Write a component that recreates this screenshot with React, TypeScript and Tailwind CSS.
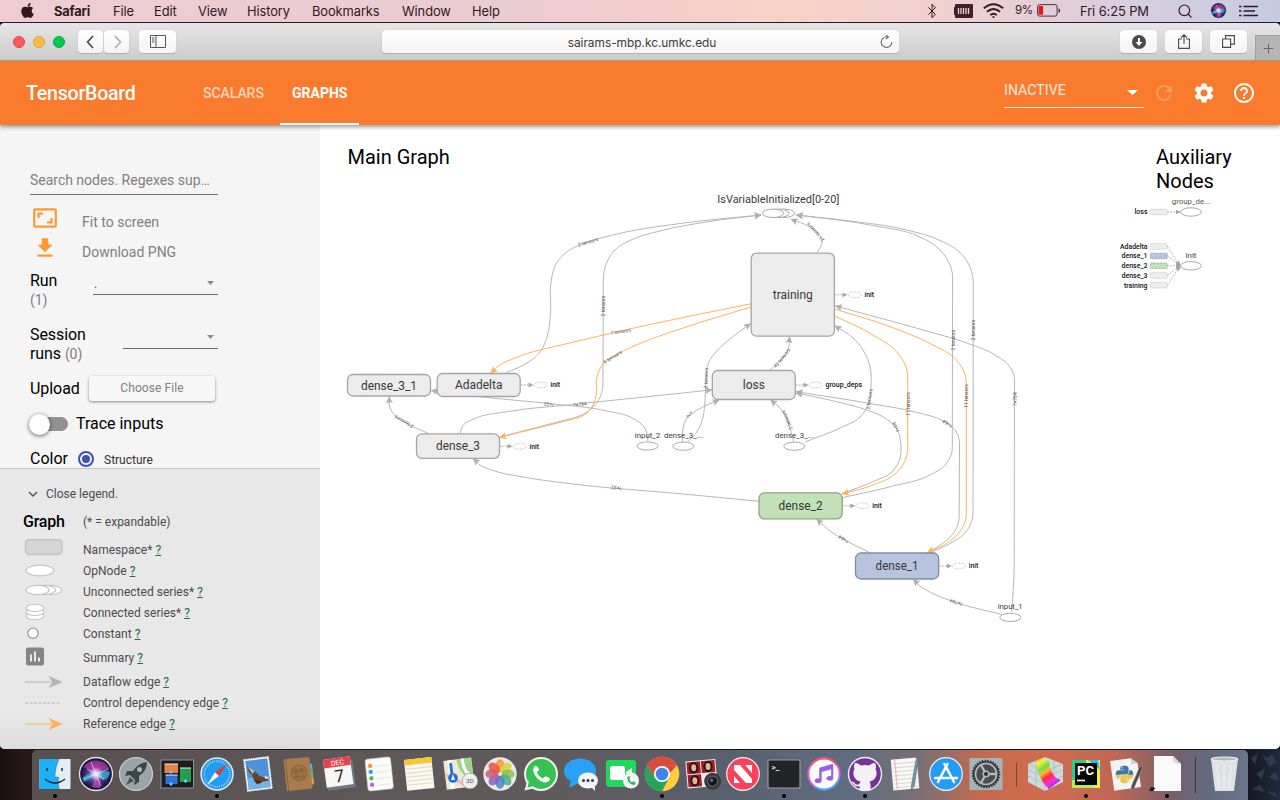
import React from "react";
import { MdRefresh, MdSettings, MdHelpOutline, MdAspectRatio, MdGetApp, MdExpandMore, MdAssessment } from "react-icons/md";
import { FaApple, FaGithubAlt, FaMusic, FaPython } from "react-icons/fa";
import { Bluetooth, Search, Plus } from "lucide-react";

type P = [number, number];

// Smooth curve through the given points; tangents lean towards the shorter neighbouring segment.
const spline = (p: P[]) => {
  const n = p.length;
  const seg = (i: number) => Math.hypot(p[i + 1][0] - p[i][0], p[i + 1][1] - p[i][1]) || 1;
  const unit = (i: number): P => [(p[i + 1][0] - p[i][0]) / seg(i), (p[i + 1][1] - p[i][1]) / seg(i)];
  const tan = p.map((_, i): P => {
    if (i === 0) return unit(0);
    if (i === n - 1) return unit(n - 2);
    const l1 = seg(i - 1);
    const l2 = seg(i);
    const u1 = unit(i - 1);
    const u2 = unit(i);
    const v: P = [u1[0] * l2 + u2[0] * l1, u1[1] * l2 + u2[1] * l1];
    const u: P = l1 > l2 * 3 ? u1 : l2 > l1 * 3 ? u2 : v;
    const m = Math.hypot(u[0], u[1]) || 1;
    return [u[0] / m, u[1] / m];
  });
  let d = `M${p[0][0]} ${p[0][1]}`;
  for (let i = 0; i < n - 1; i++) {
    const k = seg(i) / 2.8;
    d += `C${p[i][0] + tan[i][0] * k} ${p[i][1] + tan[i][1] * k} ${p[i + 1][0] - tan[i + 1][0] * k} ${p[i + 1][1] - tan[i + 1][1] * k} ${p[i + 1][0]} ${p[i + 1][1]}`;
  }
  return d;
};

type Edge = { p: P[]; ref?: boolean; label: string; at: P; rot: number };

const edges: Edge[] = [
  { p: [[506, 372.7], [528, 362.500], [540, 352], [547.500, 335], [550.5, 313], [551.3, 280], [556, 264], [566, 252.500], [582, 244], [607, 236.5], [680, 223.5], [761, 215]], label: "2 tensors", at: [588, 242], rot: -17 },
  { p: [[500, 437], [573, 418], [592, 408], [600.500, 396], [603, 380], [603.3, 280], [607, 262], [615, 250], [631, 240], [660, 231], [706, 222], [761, 215]], label: "2 tensors", at: [603.3, 306], rot: -90 },
  { p: [[429, 433.7], [407, 423.500], [394, 414.500], [389.8, 407], [389, 396.8]], label: "2 tensors", at: [404, 421.7], rot: 210 },
  { p: [[648, 441.5], [645.500, 429], [633, 418.5], [607, 411], [553, 404], [486.7, 397.4], [450, 393], [431, 390.5]], label: "?×32", at: [549, 404.2], rot: 187 },
  { p: [[460, 433.7], [463, 425.500], [475, 418.500], [507, 411.7], [573, 404.500], [680, 393.3], [712, 389.7]], label: "?×784", at: [580, 404.3], rot: -6 },
  { p: [[759, 501.3], [680, 493.7], [573, 484], [523, 477], [493, 470.5], [480, 465], [473.3, 458.7]], label: "?×32", at: [616.3, 487.6], rot: 185 },
  { p: [[817.3, 252.3], [821, 246], [822, 240], [818, 233], [810, 227], [791, 219.3]], label: "21 tensors", at: [815.5, 232], rot: 228 },
  { p: [[770, 370], [783, 358], [788, 350], [789.7, 336.7]], label: "42 tensors", at: [782, 358], rot: -52 },
  { p: [[1011.7, 612], [1013, 593], [1014.2, 567], [1014.5, 380], [1010, 367], [996.7, 356], [966.7, 343], [923, 330], [835.5, 306]], label: "?×784", at: [1015, 399], rot: -90 },
  { p: [[930, 552.7], [950, 543.5], [965, 533], [971.5, 521.7], [973, 506.7], [973.3, 283], [970, 267], [960, 252.500], [940, 240.500], [906.7, 230], [850, 221], [796.5, 215]], label: "2 tensors", at: [973.5, 330], rot: -90 },
  { p: [[842.3, 497.7], [893, 486], [930, 475], [946.7, 463], [952.3, 448], [952.6, 277], [948, 261], [938, 248], [920, 237], [873, 225.5], [796.5, 215]], label: "2 tensors", at: [953, 340], rot: -90 },
  { p: [[927, 552.7], [943, 543], [955, 531], [959.2, 516], [959.5, 444], [955, 430], [944, 421.500], [917, 412.500], [873, 404], [796, 391.7]], label: "?×64", at: [947.7, 423.5], rot: 210 },
  { p: [[842, 493.5], [873, 481.7], [893, 471], [900, 458], [900.7, 443], [897.500, 430], [886.7, 419], [866.7, 410], [840, 402.5], [796, 393]], label: "?×64", at: [896, 427], rot: 240 },
  { p: [[1001.7, 614.5], [956.7, 602.7], [933, 593.5], [920, 586], [913.3, 579.5]], label: "?×784", at: [956.3, 602.3], rot: 198 },
  { p: [[870, 552.7], [846.7, 541], [830, 531], [816.7, 519.3]], label: "?×64", at: [843.7, 539], rot: 210 },
  { p: [[682.7, 441.7], [682.7, 430], [687, 418], [700, 408.5], [719, 400]], label: "?×?", at: [689.5, 415], rot: -48 },
  { p: [[687.7, 442], [698, 430], [703, 417], [705, 400], [706, 380], [708.5, 363], [716.7, 351], [730, 339], [750.5, 323.5]], label: "2 tensors", at: [706, 378], rot: -88 },
  { p: [[793.7, 441.7], [790.7, 430], [785, 414.5], [778, 406], [770.7, 400]], label: "2 tensors", at: [787, 420], rot: 246 },
  { p: [[805, 442], [840, 428], [860, 417], [868, 406], [871, 386.7], [870, 367], [863, 350], [853, 338], [835, 325.7]], label: "2 tensors", at: [869.3, 399], rot: -80 },
  { p: [[751, 303.7], [640, 326.7], [540, 350], [515, 358], [500, 365], [490.7, 373]], ref: true, label: "7 tensors", at: [620.7, 331.5], rot: -9 },
  { p: [[751, 307], [680, 329], [640, 343.5], [617, 354.5], [603, 364], [597, 377], [596, 396], [589, 411], [570, 420], [499.7, 437.3]], ref: true, label: "6 tensors", at: [612.7, 357], rot: -32 },
  { p: [[834.7, 316], [873, 335], [896.7, 352], [906, 367], [907.7, 385], [907.7, 446.7], [905, 461], [895, 474], [873, 485], [842.5, 494]], ref: true, label: "17 tensors", at: [907.9, 404], rot: -90 },
  { p: [[834.7, 309], [890, 326.7], [933, 345], [956, 359.5], [964.500, 373], [966.3, 393], [966.3, 506.7], [965, 522], [958, 534], [946.7, 543.3], [927.5, 552.6]], ref: true, label: "11 tensors", at: [966.7, 396], rot: -90 },
];

const nodes = [
  { t: "dense_3_1", x: 347.5, y: 374.5, w: 83, h: 21.5, f: "#ececec", s: "#a5a5a5", tw: 56 },
  { t: "Adadelta", x: 437.2, y: 373.5, w: 83, h: 23, f: "#ececec", s: "#a5a5a5", tw: 47.5 },
  { t: "dense_3", x: 416.5, y: 433.8, w: 83, h: 24.5, f: "#ececec", s: "#a5a5a5", tw: 44 },
  { t: "training", x: 751.2, y: 253.2, w: 83.2, h: 83, f: "#ececec", s: "#a5a5a5", tw: 40 },
  { t: "loss", x: 712.3, y: 370.5, w: 83, h: 29, f: "#ececec", s: "#a5a5a5", tw: 22 },
  { t: "dense_2", x: 759, y: 492.8, w: 83.2, h: 26, f: "#c2e1b8", s: "#8ba585", tw: 44 },
  { t: "dense_1", x: 855.5, y: 553, w: 83.2, h: 26, f: "#b6c4de", s: "#828ca3", tw: 43 },
];

const ops: { t: string; x: number; y: number; w: number; lx: number }[] = [
  { t: "input_2", x: 647.5, y: 446, w: 25.5, lx: 647.5 },
  { t: "dense_3_...", x: 683.3, y: 446.2, w: 39, lx: 683.5 },
  { t: "dense_3_...", x: 794.3, y: 446.2, w: 39, lx: 794.5 },
  { t: "input_1", x: 1010.3, y: 617.4, w: 25, lx: 1010.2 },
];

const annotations: { x: number; y: number; t: string; w: number }[] = [
  { x: 834.5, y: 294.8, t: "init", w: 9.5 },
  { x: 795.5, y: 385, t: "group_deps", w: 36.5 },
  { x: 520.5, y: 385, t: "init", w: 9.5 },
  { x: 499.5, y: 446.3, t: "init", w: 9.5 },
  { x: 842.3, y: 505.8, t: "init", w: 9.5 },
  { x: 938.8, y: 566, t: "init", w: 9.5 },
];

const auxRows = [
  { t: "Adadelta", y: 246.5, w: 27.5, f: "#eeeeee", s: "#c4c4c4" },
  { t: "dense_1", y: 256, w: 26, f: "#b6c4de", s: "#8c9bb8" },
  { t: "dense_2", y: 265.8, w: 26, f: "#c2e1b8", s: "#86b07a" },
  { t: "dense_3", y: 275.5, w: 26, f: "#eeeeee", s: "#c4c4c4" },
  { t: "training", y: 285.2, w: 23.5, f: "#eeeeee", s: "#c4c4c4" },
];

function Graph() {
  return (
    <svg className="absolute inset-0 h-full w-full font-[Roboto,sans-serif]" viewBox="320 125 960 624">
      <defs>
        <marker id="arrow" markerUnits="userSpaceOnUse" markerWidth="8" markerHeight="8" refX="6.5" refY="3.5" orient="auto">
          <path d="M0 0L7 3.5L0 7L1.2 3.5Z" fill="#b0b0b0" />
        </marker>
        <marker id="arrow-ref" markerUnits="userSpaceOnUse" markerWidth="8" markerHeight="8" refX="6.5" refY="3.5" orient="auto">
          <path d="M0 0L7 3.5L0 7L1.2 3.5Z" fill="#ffb15c" />
        </marker>
      </defs>
      {edges.map((e, i) => (
        <g key={i}>
          <path d={spline(e.p)} fill="none" stroke={e.ref ? "#ffb15c" : "#b7b7b7"} strokeWidth="1" markerEnd={e.ref ? "url(#arrow-ref)" : "url(#arrow)"} />
          <text transform={`translate(${e.at[0]} ${e.at[1]}) rotate(${e.rot})`} y="1.7" textAnchor="middle" fontSize="5" fill="#555">{e.label}</text>
        </g>
      ))}
      {nodes.map((n) => (
        <g key={n.t}>
          <rect x={n.x} y={n.y} width={n.w} height={n.h} rx="5.5" fill={n.f} stroke={n.s} strokeWidth="1.3" />
          <text x={n.x + n.w / 2} y={n.y + n.h / 2 + 4.4} textAnchor="middle" fontSize="12.3" textLength={n.tw} lengthAdjust="spacingAndGlyphs" fill="#383838">{n.t}</text>
        </g>
      ))}
      {ops.map((o, i) => (
        <g key={i}>
          <ellipse cx={o.x} cy={o.y} rx="10.5" ry="4.1" fill="#fff" stroke="#ababab" />
          <text x={o.lx} y={o.y - 8.2} textAnchor="middle" fontSize="8" textLength={o.w} lengthAdjust="spacingAndGlyphs" fill="#3a3a3a">{o.t}</text>
        </g>
      ))}
      {[784, 778.5, 773].map((x) => (
        <ellipse key={x} cx={x} cy="213.3" rx="10.6" ry="4.2" fill="#fff" stroke="#ababab" />
      ))}
      <text x="778.3" y="203.4" textAnchor="middle" fontSize="11" textLength="122" lengthAdjust="spacingAndGlyphs" fill="#3a3a3a">IsVariableInitialized[0-20]</text>
      {annotations.map((a, i) => (
        <g key={i}>
          <path d={`M${a.x + 0.5} ${a.y}h9`} stroke="#a5a5a5" strokeDasharray="1.6 1.2" />
          <path d={`M${a.x + 8} ${a.y - 2.4}l5 2.4l-5 2.4z`} fill="#a5a5a5" />
          <ellipse cx={a.x + 20.2} cy={a.y} rx="6.6" ry="2.9" fill="#fff" stroke="#b5b5b5" strokeWidth="0.8" strokeDasharray="1.6 1.2" />
          <text x={a.x + 30} y={a.y + 2.3} fontSize="6.8" fontWeight="500" textLength={a.w} lengthAdjust="spacingAndGlyphs" fill="#111">{a.t}</text>
        </g>
      ))}
      <text x="1191" y="203.8" textAnchor="middle" fontSize="8" textLength="38.5" lengthAdjust="spacingAndGlyphs" fill="#555">group_de...</text>
      <text x="1191" y="257.8" textAnchor="middle" fontSize="8" textLength="11" lengthAdjust="spacingAndGlyphs" fill="#444">init</text>
      <text x="1147.5" y="214.4" textAnchor="end" fontSize="6.8" fontWeight="500" textLength="13" lengthAdjust="spacingAndGlyphs" fill="#111">loss</text>
      <rect x="1150.3" y="209.3" width="17" height="5.4" rx="1" fill="#eee" stroke="#c4c4c4" strokeWidth="0.8" strokeDasharray="1.8 1" />
      <path d="M1167.5 212h9" stroke="#ababab" strokeDasharray="1.6 1.2" />
      <path d="M1176 209.7l5 2.3l-5 2.3z" fill="#a5a5a5" />
      <ellipse cx="1191" cy="212" rx="10.4" ry="4.2" fill="#fff" stroke="#ababab" />
      {auxRows.map((r) => (
        <g key={r.t}>
          <text x="1147.5" y={r.y + 2.3} textAnchor="end" fontSize="6.8" fontWeight="500" textLength={r.w} lengthAdjust="spacingAndGlyphs" fill="#111">{r.t}</text>
          <rect x="1150.3" y={r.y - 2.8} width="17" height="5.6" rx="1" fill={r.f} stroke={r.s} strokeWidth="0.8" strokeDasharray="1.8 1" />
          <path d={`M1167.5 ${r.y}L1178 ${265.8 + (r.y - 265.8) * 0.15}`} stroke="#ababab" strokeWidth="0.9" strokeDasharray="1.6 1.2" />
        </g>
      ))}
      <path d="M1176 262.500l3-1.800l1.800 5.100l-1.800 5.100l-3-1.800z" fill="#a5a5a5" />
      <ellipse cx="1191" cy="265.8" rx="10.4" ry="4.2" fill="#fff" stroke="#ababab" />
    </svg>
  );
}

const menus: [string, string][] = [
  ["File", "w-[22px]"], ["Edit", "w-[25px]"], ["View", "w-[30px]"], ["History", "w-[46px]"],
  ["Bookmarks", "w-[71px]"], ["Window", "w-[51px]"], ["Help", "w-[29px]"],
];

function MenuBar() {
  return (
    <div className="flex h-[22px] shrink-0 items-center bg-[linear-gradient(90deg,#edcdd1_0%,#eaccd3_40%,#f3cfcb_52%,#f6d2c6_62%,#efd0d1_75%,#d8cddf_88%,#c6cbe2_100%)] font-[Inter,sans-serif] text-[12.9px] tracking-[-0.1px] text-[#35181c]">
      <FaApple className="ml-[19px] size-[17px] -mt-[1px]" />
      <span className="ml-[18px] w-[41px] whitespace-nowrap pt-[2px] font-bold tracking-[-0.2px]">Safari</span>
      <div className="ml-[18px] flex gap-[19px] pt-[2px]">
        {menus.map(([m, w]) => (
          <span key={m} className={`${w} whitespace-nowrap`}>{m}</span>
        ))}
      </div>
      <div className="ml-auto flex items-center">
        <Bluetooth className="mr-[14px] size-4" strokeWidth={1.5} />
        <svg className="mr-[10px] h-[14px] w-[19px]" viewBox="0 0 19 14">
          <path d="M2 0h16a1 1 0 0 1 1 1v12a1 1 0 0 1-1 1H2a1 1 0 0 1-1-1v-2H0V3h1V1a1 1 0 0 1 1-1z" fill="#3f2225" />
          <path d="M4.500 4v6M7 4v6M9.500 4v6M12 4v6M14.500 4v6" stroke="#eed0d2" strokeWidth="1.3" />
        </svg>
        <svg className="mr-[11px] h-[16px] w-[21px]" viewBox="0 0 21 16" fill="none" stroke="#38191d" strokeWidth="1.9">
          <path d="M.8 5.300Q10.500-2.800 20.200 5.300M4 8.800Q10.500 3.200 17 8.800M7.200 12.100Q10.500 9.300 13.800 12.100" />
          <circle cx="10.500" cy="14" r="1.100" fill="#38191d" stroke="none" />
        </svg>
        <span className="w-[22px] whitespace-nowrap text-[11.6px] tracking-[-0.5px]">9%</span>
        <svg className="mr-[20px] h-[13px] w-[23px]" viewBox="0 0 23 13">
          <rect x="0.600" y="0.600" width="19.500" height="11.500" rx="2" fill="none" stroke="#4b2f34" />
          <rect x="1.600" y="2" width="4.400" height="8.700" fill="#ee1111" />
          <path d="M21.500 4.500a2 2 0 0 1 0 4z" fill="#4b2f34" />
        </svg>
        <span className="w-[75px] whitespace-nowrap pt-[2px]">Fri 6:25 PM</span>
        <Search className="ml-[22px] size-[16px]" strokeWidth={1.8} />
        <svg className="ml-[17px] size-[17px]" viewBox="-18 -18 36 36"><SiriArt /></svg>
        <svg className="ml-[12px] mr-[22px] h-[12px] w-[19px]" viewBox="0 0 19 12">
          <path d="M4.500 1.500h14.500M4.500 6h11.500M4.500 10.500h14.500" stroke="#2a1a2c" strokeWidth="1.700" />
          <path d="M0 1.500h2.500M0 6h2.500M0 10.500h2.500" stroke="#2a1a2c" strokeWidth="1.700" />
        </svg>
      </div>
    </div>
  );
}

const btn = "flex h-[23px] items-center justify-center rounded-[4px] bg-gradient-to-b from-white to-[#f3f3f3] shadow-[0_1px_0_#b0b0b0,0_0_1px_#aaa]";

function Toolbar() {
  return (
    <div className="flex h-[38px] shrink-0 items-center border-b border-[#a2a9a9] bg-gradient-to-b from-[#e6e6e6] to-[#cccccc]">
      <span className="ml-[13px] size-3 rounded-full border border-[#e2474a] bg-[#fc5b57]" />
      <span className="ml-2 size-3 rounded-full border border-[#dfa23a] bg-[#fdbc40]" />
      <span className="ml-2 size-3 rounded-full border border-[#08ab44] bg-[#00c951]" />
      <div className={`${btn} ml-[13px] w-[25px]`}>
        <svg className="size-4" viewBox="0 0 16 16"><path d="M10 2L4.500 8l5.500 6" fill="none" stroke="#444" strokeWidth="1.600" /></svg>
      </div>
      <div className={`${btn} ml-px w-[25px]`}>
        <svg className="size-4" viewBox="0 0 16 16"><path d="M6 2l5.500 6L6 14" fill="none" stroke="#aaa" strokeWidth="1.600" /></svg>
      </div>
      <div className={`${btn} ml-[10px] w-[37px]`}>
        <svg className="h-[13px] w-[16px]" viewBox="0 0 16 13"><path d="M.5.5h15v12H.5zM6 .5v12M2 3h2.500M2 5h2.500M2 7h2.500" fill="none" stroke="#555" /></svg>
      </div>
      <div className={`${btn} ml-[206px] w-[517px] px-[5px]`}>
        <span className="ml-auto mr-auto pl-[17px] pt-[2px] font-[Inter,sans-serif] text-[11.9px] tracking-[-0.020px] text-[#3c3c3c]">sairams-mbp.kc.umkc.edu</span>
        <svg className="mr-px size-[13px]" viewBox="0 0 13 13" fill="none" stroke="#6a6a6a" strokeWidth="1.100">
          <path d="M11.800 7A5.300 5.300 0 1 1 6.500 1.800H8" /><path d="M6 0L8.500 1.900L6 4" />
        </svg>
      </div>
      <div className={`${btn} ml-[221px] w-[37px]`}>
        <svg className="size-[14px]" viewBox="0 0 14 14"><circle cx="7" cy="7" r="7" fill="#4a4a4a" /><path d="M7 3v5" stroke="#fff" strokeWidth="2" /><path d="M3.500 7h7L7 11z" fill="#fff" /></svg>
      </div>
      <div className={`${btn} ml-[8px] w-[37px]`}>
        <svg className="h-[15px] w-[12px]" viewBox="0 0 12 15"><path d="M4 5H.600v9.400h10.800V5H8M6 10V1M3 3.700L6 .800l3 2.900" fill="none" stroke="#4a4a4a" strokeWidth="1.100" /></svg>
      </div>
      <div className={`${btn} ml-[8px] w-[37px]`}>
        <svg className="size-[13px]" viewBox="0 0 13 13"><path d="M.6 4h8v8.400h-8zM3.500 4V.6h8.900v8.500H8.600" fill="none" stroke="#4a4a4a" strokeWidth="1.100" /></svg>
      </div>
      <div className="ml-auto mt-[12px] flex h-[25px] w-[25px] items-center justify-center border-l border-t border-[#a0a0a0] bg-[#b5b5b5]">
        <Plus className="size-[15px] text-[#666]" strokeWidth={1.600} />
      </div>
    </div>
  );
}

function Header() {
  return (
    <header className="relative z-10 flex h-16 shrink-0 items-center bg-[#fa7b2d] text-white shadow-[0_2px_4px_rgba(0,0,0,0.4)]">
      <div className="ml-[26px] w-[177px] pt-[2px] text-[19.600px] font-medium tracking-[-0.250px]">TensorBoard</div>
      <div className="w-[77px] pt-px text-[14px] font-medium tracking-[-0.050px] text-white/70">SCALARS</div>
      <div className="flex h-16 w-[79px] items-center border-b-2 border-white pl-[12px] pt-[2px] text-[14px] font-bold">GRAPHS</div>
      <div className="ml-auto mr-[8px] flex h-[32px] w-[140px] justify-between border-b border-white/80 pb-1 text-[14px] leading-[29px] -mt-[2px]">
        <span className="tracking-[0.100px] text-white/85">INACTIVE</span>
        <svg className="mt-[14px] mr-[6px] h-[5px] w-[11px]" viewBox="0 0 11 5"><path d="M0 0h11L5.500 5z" fill="#fff" /></svg>
      </div>
      <MdRefresh className="size-6 opacity-25" />
      <MdSettings className="ml-4 size-6" />
      <MdHelpOutline className="ml-4 mr-[24px] size-6" />
    </header>
  );
}

const Caret = () => <svg className="h-[4px] w-[7px]" viewBox="0 0 7 4"><path d="M0 0h7L3.500 4z" fill="#8a8a8a" /></svg>;

function Controls() {
  return (
    <div className="h-[343px] overflow-hidden pl-[30px] text-[14px]">
      <div className="mt-[40px] flex h-[30px] w-[188px] items-center whitespace-nowrap border-b border-[#6d6d6d] pt-[2px] text-[14px] tracking-[-0.020px] text-[#808080]">Search nodes. Regexes sup…</div>
      <div className="mt-[9px] flex h-[30px] items-center">
        <MdAspectRatio className="ml-[2px] size-[26px] -mt-[2px] text-[#ff9834]" />
        <span className="ml-[24px] pt-[7px] tracking-[0.020px] text-[#808080]">Fit to screen</span>
      </div>
      <div className="flex h-[30px] items-center">
        <MdGetApp className="ml-[2px] size-[26px] -mt-[2px] text-[#ff9834]" />
        <span className="ml-[24px] pt-[7px] text-[#808080]">Download PNG</span>
      </div>
      <div className="mt-[7px] flex h-[54px]">
        <div className="w-[63px] text-[16px] leading-[20px] tracking-[-0.050px] text-black">Run<div className="text-[14px] leading-[19px] text-[#808080]">(1)</div></div>
        <div className="flex h-[24px] w-[125px] items-center justify-between border-b border-[#6d6d6d] pl-px pr-[4px]"><span className="pt-[2px] text-[12px] text-[#555]">.</span><Caret /></div>
      </div>
      <div className="flex h-[54px]">
        <div className="w-[93px] text-[16px] leading-[19px] tracking-[-0.080px] text-black">Session<br />runs <span className="text-[14px] text-[#808080]">(0)</span></div>
        <div className="flex h-[24px] w-[95px] items-center justify-end border-b border-[#6d6d6d] pr-[4px]"><Caret /></div>
      </div>
      <div className="-mt-[4px] flex h-[26px] items-center">
        <span className="w-[59px] pt-[2px] text-[16px] tracking-[-0.050px] text-black">Upload</span>
        <span className="flex h-[25px] w-[126px] items-center justify-center rounded-[3px] bg-[#f7f7f7] text-[12px] tracking-[0.080px] text-[#808080] shadow-[0_1px_3px_rgba(0,0,0,0.45)]">Choose File</span>
      </div>
      <div className="mt-[12px] flex h-[22px] items-center">
        <div className="-ml-px mr-px flex h-[14px] w-[39px] items-center"><span className="relative z-10 size-[21px] shrink-0 rounded-full bg-white shadow-[0_1px_4px_rgba(0,0,0,0.6)]" /><span className="-ml-[12px] h-[14px] w-[30px] rounded-full bg-[#929292]" /></div>
        <span className="ml-[7px] text-[16px] tracking-[-0.020px] text-black">Trace inputs</span>
      </div>
      <div className="mt-[13px] flex h-[22px] items-center">
        <span className="w-[48px] text-[16px] text-black">Color</span>
        <span className="flex size-4 items-center justify-center rounded-full border-2 border-[#3f51b5]"><span className="size-2 rounded-full bg-[#3f51b5]" /></span>
        <span className="ml-[10px] pt-px text-[12px] text-[#333]">Structure</span>
      </div>
    </div>
  );
}

const legend: { t: string; h: string; icon: React.ReactNode }[] = [
  { t: "Namespace*", h: "h-[21px]", icon: <rect x="1.500" y="-9.800" width="36.500" height="14.700" rx="4" fill="#d5d5d5" stroke="#c3c3c3" strokeWidth="1.500" /> },
  { t: "OpNode", h: "h-[21px]", icon: <ellipse cx="16" cy="0" rx="13.800" ry="5.300" fill="#fff" stroke="#c5c5c5" strokeWidth="1.200" /> },
  { t: "Unconnected series*", h: "h-[21px]", icon: [26, 20, 13.500].map((x) => <ellipse key={x} cx={x} cy="-1.500" rx="11.500" ry="4.600" fill="#fff" stroke="#c5c5c5" strokeWidth="1.200" />) },
  { t: "Connected series*", h: "h-[21px]", icon: [3.500, -0.500, -4.500].map((y) => <ellipse key={y} cx="11" cy={y} rx="9" ry="3.500" fill="#fff" stroke="#c5c5c5" strokeWidth="1.100" />) },
  { t: "Constant", h: "h-[21px]", icon: <circle cx="9" cy="-0.300" r="5.200" fill="#fff" stroke="#8c8c8c" strokeWidth="1.100" /> },
  { t: "Summary", h: "h-[27px]", icon: <g transform="translate(-1 -13)"><MdAssessment size={24} color="#858585" /></g> },
  { t: "Dataflow edge", h: "h-[21px]", icon: <path d="M1 .500h26M26-4.500l11 5l-11 5l3-5z" fill="#b5b5b5" stroke="#b5b5b5" strokeWidth="1.200" /> },
  { t: "Control dependency edge", h: "h-[21px]", icon: <path d="M1 .500h36" stroke="#b5b5b5" strokeWidth="1.200" strokeDasharray="3 1.500" /> },
  { t: "Reference edge", h: "h-[21px]", icon: <path d="M1 .500h26M26-4.500l11 5l-11 5l3-5z" fill="#ffb15c" stroke="#ffb15c" strokeWidth="1.200" /> },
];

function Legend() {
  return (
    <div className="flex-1 border-t border-[#c8c8c8] bg-[linear-gradient(180deg,#e8e8e8_88%,#dcdcdc_100%)] pl-[24px] text-[12px] text-[#4c4c4c]">
      <div className="mt-[15px] flex h-5 items-center"><MdExpandMore className="size-[18px] text-[#555]" /><span className="ml-[4px]">Close legend.</span></div>
      <div className="mt-[8px] flex h-5 items-center"><span className="-ml-px w-[60px] text-[16px] font-medium tracking-[-0.200px] text-black">Graph</span><span>(* = expandable)</span></div>
      <div className="mt-[7px]">
        {legend.map((l) => (
          <div key={l.t} className={`flex items-center ${l.h}`}>
            <svg className="h-[21px] w-[59px] overflow-visible" viewBox="0 -10.5 59 21">{l.icon}</svg>
            <span className="tracking-[0.020px]">{l.t} <a className="text-[#1b6b40] underline">?</a></span>
          </div>
        ))}
      </div>
    </div>
  );
}

function SiriArt() {
  return (
    <>
      <defs>
        <radialGradient id="siri"><stop offset="0" stopColor="#d8b8ff" /><stop offset=".3" stopColor="#8a4fc0" /><stop offset=".65" stopColor="#3b2a6c" /><stop offset="1" stopColor="#0c1130" /></radialGradient>
        <radialGradient id="siri-glow"><stop offset="0" stopColor="#fff" /><stop offset="1" stopColor="#fff" stopOpacity="0" /></radialGradient>
      </defs>
      <circle r="16.500" fill="url(#siri)" stroke="#e3e3e8" strokeWidth="1.300" />
      <path d="M-13-7Q-6-15 4-13Q12-11 13-4Q7-7 0 0Q-6-5-13-7z" fill="#c93aa6" opacity=".6" />
      <path d="M-14 4Q-5-3 0 0Q8-5 14-2Q13 5 7 6Q4 4 0 1Q-6 6-12 8z" fill="#2fb8d8" opacity=".75" />
      <path d="M-4 13Q-1 5 0 1Q5 7 4 14z" fill="#d85bc8" opacity=".6" />
      <circle cx="0" cy="0" r="7" fill="url(#siri-glow)" opacity=".9" />
      <path d="M0 0L12-5M0 0L-12 5M0 0L-5-12M0 0L5 12M0 0L-9-5M0 0L8 5" stroke="#fff" strokeWidth=".8" opacity=".7" />
    </>
  );
}

const Gear = () => (
  <>
    <rect x="-16.500" y="-16" width="33" height="32" rx="1" fill="#a7b3b7" />
    <circle r="13" fill="#4a4d50" stroke="#2d2f31" strokeWidth="2.500" strokeDasharray="1.500 1.200" />
    <circle r="10.500" fill="none" stroke="#b5b9bb" strokeWidth="1.600" />
    <path d="M0 0H10M0 0L-5-9M0 0L-5 9" stroke="#b5b9bb" strokeWidth="2.300" />
    <circle r="2.800" fill="#303235" stroke="#b5b9bb" strokeWidth="1.500" />
  </>
);

type DockApp = { name: string; dot?: boolean; art: React.ReactNode };

const apps: DockApp[] = [
  { name: "finder", dot: true, art: <><path d="M-15.500-15H15.500V15H-15.500z" fill="#e3edf7" /><path d="M-15.500-15H4C1-8 0-3 0 3H3.500Q3 10 4 15H-15.500z" fill="#1cb0f6" /><path d="M-8-6v3M7-6v3M-10 5Q0 13 10 5" fill="none" stroke="#14243c" strokeWidth="1.500" /><path d="M4-15C1-8 0-3 0 3H3.500Q3 10 4 15" fill="none" stroke="#1c3c60" strokeWidth=".6" opacity=".6" /></> },
  { name: "siri", art: <SiriArt /> },
  { name: "launchpad", art: <><circle r="16.500" fill="#9ba5a9" stroke="#c8ced0" strokeWidth="1.200" /><path d="M11-12Q2-11-3-3L-9-3L-11 2L-6 1L-1 6L-2 11L3 8L3 2Q11-3 11-12z" fill="#3d4347" /><circle cx="3.500" cy="-4.500" r="2.500" fill="#aeb7ba" /><path d="M-6 3L-10 11L-2 7z" fill="#4c5357" /></> },
  { name: "mission", art: <><rect x="-16" y="-14" width="32.500" height="28" fill="#1b1c1e" stroke="#8b9295" /><rect x="-12.500" y="-10" width="13.500" height="9" fill="#eb813f" /><rect x="-11.500" y="1" width="12" height="9" fill="#2c74d7" /><rect x="3" y="-6" width="11" height="14" fill="#23a04a" /><path d="M-12.500-10h13.500M3-6h11M-11.500 1h12" stroke="#eee" /><circle cx="-6" cy="-2" r="1.700" fill="#5bc8ff" /><circle cx="-6" cy="10" r="1.700" fill="#5bc8ff" /><circle cx="8.500" cy="7" r="1.700" fill="#5bc8ff" /></> },
  { name: "safari", dot: true, art: <><circle r="16.700" fill="#e8eaec" /><circle r="15.200" fill="#1f9df0" /><circle r="12.800" fill="none" stroke="#c8e7fb" strokeWidth="2" strokeDasharray=".6 1.300" /><path d="M11-11L1.800 2L-2-1.800z" fill="#e9372f" /><path d="M-10 11L-2-1.800L1.800 2z" fill="#fff" /></> },
  { name: "mail", art: <g transform="rotate(-7)"><rect x="-12.500" y="-16" width="25" height="32" fill="#f2f2f2" stroke="#f2f2f2" strokeWidth="1" strokeDasharray="1.200 1.200" /><rect x="-11" y="-14.500" width="22" height="29" fill="#4b94da" /><rect x="-11" y="3" width="22" height="11.500" fill="#74b2e4" /><path d="M-10-9Q-8-3-2-2L1 2L8 5L10 8L4 8L0 9L-5 5L-6 0Q-10-3-10-9z" fill="#6b4327" /><path d="M-9-8L-4-4L-5 0z" fill="#d8c5a8" /><path d="M6 3L10 5L7 6z" fill="#fff" /><path d="M-5 6Q0 5 3 9L-2 10z" fill="#4a2e1a" /></g> },
  { name: "contacts", art: <g transform="rotate(-6)"><path d="M12-9h3v7h-3z" fill="#4db2e0" /><path d="M12-2h3v7h-3z" fill="#66bc63" /><path d="M12 5h3v7h-3z" fill="#e8a13e" /><rect x="-13" y="-16" width="26" height="32" rx="1.500" fill="#a87c4e" /><path d="M-11-16V16" stroke="#8a6138" /><circle cx="1" cy="-1" r="8" fill="#9d7245" stroke="#8d6439" /><circle cx="-1.500" cy="-3" r="2.500" fill="#8d6439" /><circle cx="4" cy="-3" r="2.500" fill="#8d6439" /><path d="M-5 4Q-1-2 2 4Q5-2 7 4z" fill="#8d6439" /></g> },
  { name: "calendar", art: <g transform="rotate(-8)"><rect x="-13" y="-13" width="28" height="28" rx="1" fill="#6c7a86" /><rect x="-14" y="-16" width="27" height="28" fill="#f6f6f6" /><rect x="-14" y="-16" width="27" height="8.500" fill="#e5454a" /><text y="-9" textAnchor="middle" fontSize="7" fill="#fff">DEC</text><text y="8" textAnchor="middle" fontSize="17" fill="#222">7</text></g> },
  { name: "reminders", art: <g transform="rotate(-6)"><rect x="-12.500" y="-16" width="25.500" height="32" rx="2.500" fill="#fbfbfb" stroke="#ccc" strokeWidth=".6" /><circle cx="-8" cy="-9" r="2.200" fill="#ff9330" /><circle cx="-8" cy="-3" r="2.200" fill="#28a2f5" /><circle cx="-8" cy="3.500" r="2.200" fill="#4bc04f" /><circle cx="-8" cy="10" r="2.200" fill="#c565dc" /><path d="M-4-8H11M-4-2H11M-4 4.500H11M-4 11H11" stroke="#ddd" strokeWidth=".7" /></g> },
  { name: "notes", art: <g transform="rotate(-6)"><rect x="-13.500" y="-15.500" width="27.500" height="31" fill="#fbf9ee" /><path d="M-13.500-15.500h27.500v5.500h-27.500z" fill="#f6c733" /><path d="M-13-6H13.500M-13-2H13.500M-13 2H13.500M-13 6H13.500M-13 10H13.500" stroke="#d8d4c5" strokeWidth=".8" /></g> },
  { name: "maps", art: <><g transform="rotate(-7)"><rect x="-15" y="-15" width="28" height="29" fill="#eee9d5" /><path d="M-2-15Q0 4 13 7V-15z" fill="#9ed488" /><path d="M4-15Q4 2 13 3" fill="none" stroke="#fff" strokeWidth="3" /><path d="M-9-15V14" stroke="#fff" strokeWidth="4" /><path d="M-15-1Q-4 5 7 14" fill="none" stroke="#f3b7c2" strokeWidth="3" /><path d="M-8-12V2" stroke="#2875d9" strokeWidth="3" /></g><circle cx="-7" cy="4" r="4.800" fill="#1770d8" /><path d="M-9 6L-7 0L-5 6z" fill="#fff" /><circle cx="10" cy="7" r="7.800" fill="#eee" stroke="#999" strokeWidth=".7" /><text x="10" y="9.300" fontSize="6" textAnchor="middle" fill="#555">3D</text></> },
  { name: "photos", art: <><circle r="16.700" fill="#eceae8" />{["#f7952e", "#d9d33a", "#8cc34e", "#4fae8c", "#4a87cf", "#8663ba", "#c75a8d", "#ea5540"].map((c, i) => <ellipse key={c} cx="0" cy="-8.200" rx="4.600" ry="6.500" fill={c} opacity=".85" transform={`rotate(${i * 45})`} />)}</> },
  { name: "whatsapp", art: <><circle r="16" fill="#35c251" stroke="#f0f2f0" strokeWidth="2" /><path d="M-16.500 16.500L-13.500 6L-6 14z" fill="#f0f2f0" /><path d="M-13.500 13.500L-12 7L-7 12z" fill="#35c251" /><path d="M-6-8C-9-5-8-1-4 4C1 9 6 10 9 6C10 4 5 2 4 2.500L2 4.500C0 4-4 0-4-2L-2-4C-2-5-4-9-6-8z" fill="#fff" /></> },
  { name: "messages", art: <><ellipse cx="-1" cy="-3" rx="16" ry="12.500" fill="#2aa1f4" /><path d="M-10 5L-12 14L0 8z" fill="#2aa1f4" /><ellipse cx="7" cy="6.500" rx="10" ry="8" fill="#f4f4f4" /><path d="M9 12L14 17L14 10z" fill="#f4f4f4" /><circle cx="2.500" cy="6.500" r="1.500" fill="#19446e" /><circle cx="7" cy="6.500" r="1.500" fill="#19446e" /><circle cx="11.500" cy="6.500" r="1.500" fill="#19446e" /></> },
  { name: "facetime", art: <><rect x="-16" y="-14" width="30" height="27" rx="3" fill="#20d95c" /><rect x="-12" y="-8" width="15" height="14" rx="2.500" fill="#fff" /><path d="M4-2L10-6V5L4 2z" fill="#fff" /><circle cx="9" cy="6.500" r="8" fill="#f4f4f4" /><path d="M5 3Q6 11 13 11L13.500 8L11 7.500L9.500 8.500Q7.500 7 7.500 5L8 2z" fill="#29b657" /></> },
  { name: "chrome", dot: true, art: <><circle r="17.300" fill="#fccd3d" /><path d="M-15-8.650A17.300 17.300 0 0 1 15-8.650L0-8.300L-7 4z" fill="#d94a3f" /><path d="M-15-8.650A17.300 17.300 0 0 0 0 17.300L7 4L0 7L-7 4z" fill="#28a35a" /><path d="M15-8.650H0V0H7z" fill="#d94a3f" /><circle r="8" fill="#fff" /><circle r="6.300" fill="#3e83ee" /></> },
  { name: "booth", art: <g transform="rotate(-5)"><rect x="-16.500" y="-14" width="30" height="27" fill="#eee" /><rect x="-15.500" y="-13" width="13.500" height="12" fill="#a31b23" /><rect x="-1" y="-13" width="13.500" height="12" fill="#a31b23" /><rect x="-15.500" y="0" width="13.500" height="12" fill="#a31b23" />{[[-8.700, -7], [5.700, -7], [-8.700, 6]].map((q, i) => <g key={i}><ellipse cx={q[0]} cy={q[1]} rx="4.500" ry="5.500" fill="#241317" /><ellipse cx={q[0]} cy={q[1]} rx="2.500" ry="3.500" fill="#e9b58b" /></g>)}<circle cx="9" cy="8" r="8.500" fill="#3a3b3d" /><circle cx="9" cy="8" r="5" fill="#16171a" stroke="#65676a" /><circle cx="8" cy="7" r="1.700" fill="#4c6a9b" /></g> },
  { name: "news", art: <><circle r="16.300" fill="#f9415c" stroke="#eee" strokeWidth="1.200" /><path d="M-9-9h6L9 5v4H3L-9-4zM2-9h7v8zM-9 2l6 7h-6z" fill="#fff" /></> },
  { name: "terminal", dot: true, art: <><rect x="-16" y="-14" width="32" height="28" rx="1" fill="#222426" stroke="#979b9e" strokeWidth="1.200" /><text x="-12.500" y="-4" fontSize="8" fontWeight="700" fill="#eee">&gt;_</text></> },
  { name: "itunes", art: <><circle r="15.700" fill="#fafafa" stroke="#d85be1" strokeWidth="2" /><path d="M-13-9A16 16 0 0 1 13-9" fill="none" stroke="#fa4d66" strokeWidth="2" /><path d="M-9 13A16 16 0 0 0 15 5" fill="none" stroke="#35aaf4" strokeWidth="2" /><g transform="translate(-9.500 -10)"><FaMusic size={19} color="#9d5fe2" /></g></> },
  { name: "github", dot: true, art: <><circle r="16.500" fill="#753397" stroke="#f0e9f2" strokeWidth="1.400" /><path d="M-10.500-10.500Q-9-12-4-8.500Q0-9.500 4-8.500Q9-12 10.500-10.500Q11.500-7 10.500-5Q12-2.500 11.500 1Q10 6.500 4.500 7.500Q6 9 5.500 16H-5.500V12Q-10 13-12 9.500L-14 7.500Q-11 7-9.500 10Q-8 11-5.500 10Q-5.500 8.500-4.500 7.500Q-10 6.500-11.500 1Q-12-2.500-10.500-5Q-11.500-7-10.500-10.500z" fill="#f2f2f2" /></> },
  { name: "textedit", art: <g transform="rotate(-5)"><rect x="-13" y="-15.500" width="26" height="31" fill="#f8f8f6" /><path d="M-12-11H12M-12-7H12M-12-3H12M-12 1H12M-12 5H12M-12 9H12M-12 13H12" stroke="#ccd0d4" strokeWidth=".8" /><path d="M-9-15V15" stroke="#e99a9a" strokeWidth=".7" /><path d="M13-16L15-15L8 13L5 16L5.500 12z" fill="#7396ac" stroke="#526b7c" strokeWidth=".6" /></g> },
  { name: "appstore", art: <><circle r="16.300" fill="#219df5" stroke="#edf1f4" strokeWidth="1.200" /><path d="M1.500-10L-8 8M-1.500-10L8 8M-11 4H3M8 4h3" stroke="#fff" strokeWidth="2.600" strokeLinecap="round" /></> },
  { name: "prefs", art: <Gear /> },
];

const pinned: DockApp[] = [
  { name: "grapher", art: <><defs><linearGradient id="rain" x1="0" y1="0" x2=".6" y2="1"><stop offset="0" stopColor="#ff9a2e" /><stop offset=".18" stopColor="#f4f13c" /><stop offset=".36" stopColor="#6fe04a" /><stop offset=".5" stopColor="#ffb52d" /><stop offset=".65" stopColor="#ff2f3f" /><stop offset=".82" stopColor="#ff2fd3" /><stop offset="1" stopColor="#8d33ff" /></linearGradient></defs><path d="M-17-10L0-17L18-10V8L0 17L-17 8z" fill="#cbdadd" /><path d="M-17-10L0-3L18-10M0-3V17M-17-4L0 3L18-4M-17 2L0 10L18 2M-9-13V12M9-13V12" fill="none" stroke="#9eb2b8" strokeWidth=".6" /><path d="M-10-12Q-3-18 4-13Q6 4 16 6L4 15Q-5 8-10-12z" fill="url(#rain)" /></> },
  { name: "pycharm", dot: true, art: <><path d="M-14-14H14V14H-14z" fill="#23d18b" /><path d="M0-14H14V14H4z" fill="#e8ed55" /><path d="M-14 6H8V14H-14z" fill="#b9ea50" /><path d="M2-14H12L14-4z" fill="#21c5ee" /><rect x="-11" y="-11" width="22" height="22" fill="#050505" /><text x="-9" y="1" fontSize="13" fontWeight="700" textLength="17" fill="#fff">PC</text><path d="M-9 6.500h8" stroke="#fff" strokeWidth="1.600" /></> },
  { name: "python", art: <><g transform="rotate(-8)"><path d="M-14-15H7L13-9V15H-14z" fill="#f3f3f3" /><path d="M7-15V-9H13z" fill="#ccc" /></g><defs><linearGradient id="py" x1="0" y1="0" x2="0" y2="1"><stop offset=".48" stopColor="#3c76a8" /><stop offset=".55" stopColor="#f2c447" /></linearGradient></defs><g transform="translate(-11.500 -9.500)"><FaPython size={20} style={{ fill: "url(#py)" }} /></g><path d="M17-7L8 14L5 17L5.500 12L14-8z" fill="#4d4a48" stroke="#999" strokeWidth=".6" /></> },
  { name: "document", dot: true, art: <><path d="M-13-18H6L14-10V17H-13z" fill="#fafafa" /><path d="M6-18Q4-10 14-10z" fill="#d7d7d7" /><path d="M-18 17l2-4l4.500 1l-2.500 3z" fill="#222" /></> },
];

function DockIcon({ a }: { a: DockApp }) {
  return (
    <div className="flex w-[40.480px] shrink-0 flex-col items-center">
      <svg className="mt-[5.500px] size-9 overflow-visible font-[Roboto,sans-serif]" viewBox="-18 -18 36 36">{a.art}</svg>
      {a.dot && <span className="mt-[2.500px] size-1 rounded-full bg-black" />}
    </div>
  );
}

function Dock() {
  return (
    <div className="flex h-[51px] flex-1 bg-[linear-gradient(90deg,#171111_0%,#241a19_2%,#111_50%,#10141e_97%,#202b3c_100%)] pt-px">
      <div className="ml-[32px] flex h-[50px] w-[1216px] shrink-0 rounded-t-[5px] bg-[linear-gradient(90deg,#585150_0%,#5d5656_22%,#615a5c_43%,#595f6c_56%,#606d80_68%,#7b6f75_73%,#c36a4f_78%,#d06c4e_83%,#bf6754_89%,#765f6b_94%,#606c82_97%,#6c7488_100%)] pl-[3px]">
        {apps.map((a) => <DockIcon key={a.name} a={a} />)}
        <span className="mt-[13px] mr-[8.500px] ml-[9.500px] h-6 w-px shrink-0 bg-black/35" />
        {pinned.map((a) => <DockIcon key={a.name} a={a} />)}
        <span className="mt-[7px] mr-[8px] ml-[8px] h-9 w-px shrink-0 bg-black/45" />
        <DockIcon a={{ name: "trash", art: <><path d="M-13-15H14L10 17H-9z" fill="#dfe2e4" /><ellipse cx=".5" cy="-15" rx="13.500" ry="2" fill="#b3b9bd" stroke="#f5f5f5" /><path d="M-7-9L-5 15M0-9V15M7-9L5 15" stroke="#f6f7f8" strokeWidth="2" opacity=".4" /></> }} />
      </div>
      <svg className="h-[50px] w-[32px]" viewBox="0 0 32 50" fill="none">
        <path d="M3 8l7-5l-3 12zM14 5l6 3l4-4l4 8l-6 5zM8 24l9-6l-3 11zM21 27l7-5l2 9zM4 39l8-4l5 7zM19 41l8 2l2 5z" fill="#38445a" opacity=".7" />
      </svg>
    </div>
  );
}

export default function App() {
  return (
    <div className="flex h-[800px] w-[1280px] flex-col overflow-hidden bg-[#111] font-[Roboto,sans-serif]">
      <MenuBar />
      <div className="flex h-[727px] shrink-0 flex-col overflow-hidden rounded-[5px] border-t border-[#251b24] bg-white">
        <Toolbar />
        <Header />
        <div className="flex min-h-0 flex-1">
          <aside className="flex w-[320px] shrink-0 flex-col bg-[#f5f5f5]">
            <Controls />
            <Legend />
          </aside>
          <main className="relative flex flex-1 justify-between bg-white pt-[20px] text-[20px] leading-6 text-black">
            <Graph />
            <h1 className="ml-[27.500px]">Main Graph</h1>
            <h2 className="mr-[34px] w-[90px]">Auxiliary Nodes</h2>
          </main>
        </div>
      </div>
      <Dock />
    </div>
  );
}
